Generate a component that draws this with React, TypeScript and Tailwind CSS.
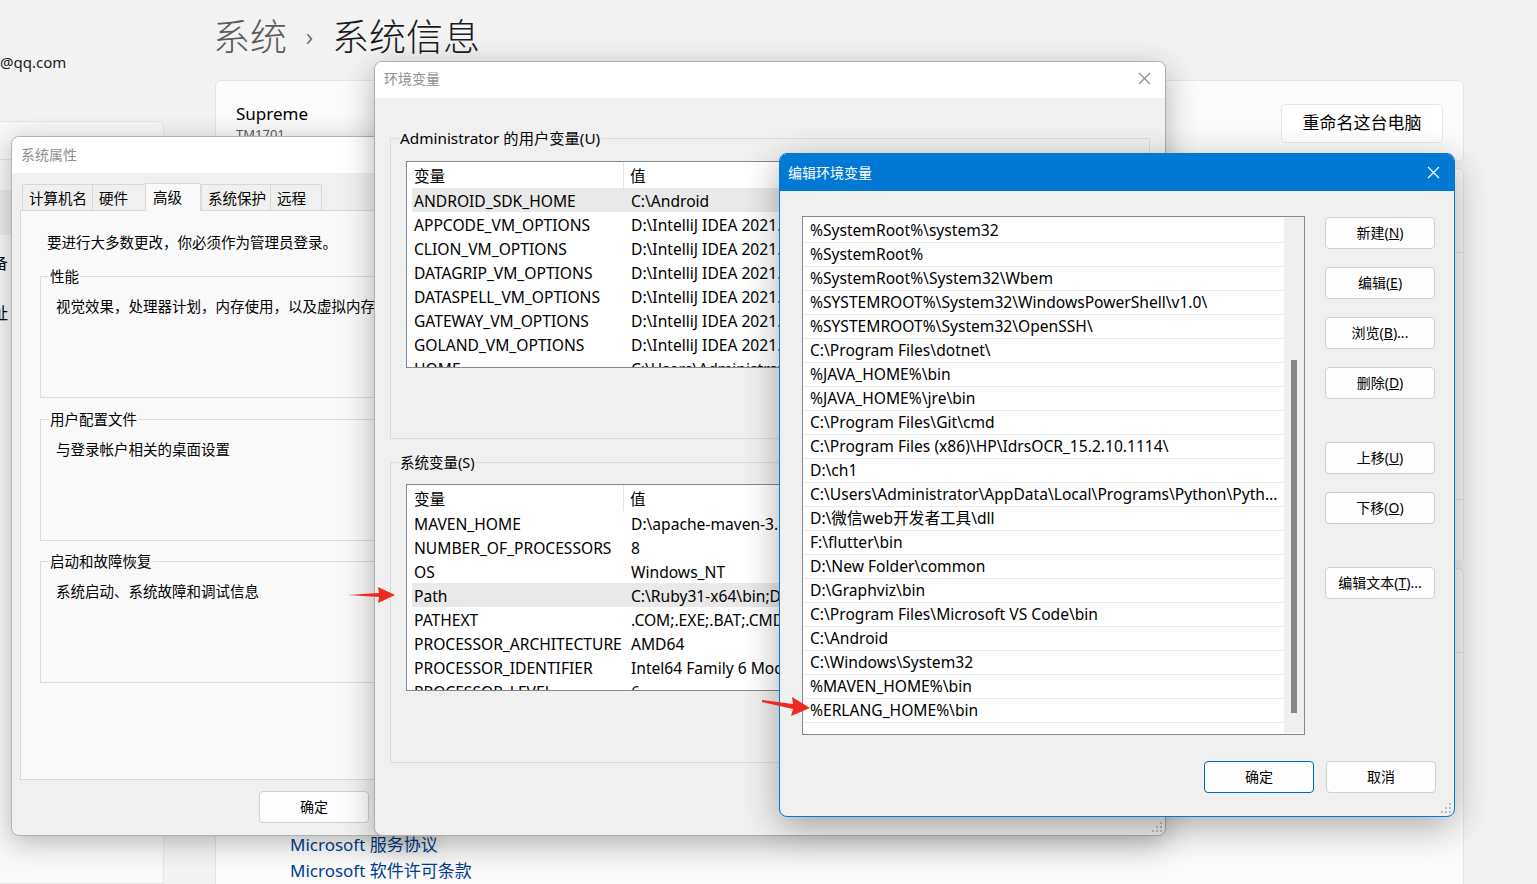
import clsx from "clsx";

const userVars = [
  ["ANDROID_SDK_HOME", "C:\\Android"],
  ["APPCODE_VM_OPTIONS", "D:\\IntelliJ IDEA 2021.3\\appcode.vmoptions"],
  ["CLION_VM_OPTIONS", "D:\\IntelliJ IDEA 2021.3\\clion.vmoptions"],
  ["DATAGRIP_VM_OPTIONS", "D:\\IntelliJ IDEA 2021.3\\datagrip.vmoptions"],
  ["DATASPELL_VM_OPTIONS", "D:\\IntelliJ IDEA 2021.3\\dataspell.vmoptions"],
  ["GATEWAY_VM_OPTIONS", "D:\\IntelliJ IDEA 2021.3\\gateway.vmoptions"],
  ["GOLAND_VM_OPTIONS", "D:\\IntelliJ IDEA 2021.3\\goland.vmoptions"],
  ["HOME", "C:\\Users\\Administrator"],
];

const sysVars = [
  ["MAVEN_HOME", "D:\\apache-maven-3.8.4"],
  ["NUMBER_OF_PROCESSORS", "8"],
  ["OS", "Windows_NT"],
  ["Path", "C:\\Ruby31-x64\\bin;D:\\Python"],
  ["PATHEXT", ".COM;.EXE;.BAT;.CMD;.VBS"],
  ["PROCESSOR_ARCHITECTURE", "AMD64"],
  ["PROCESSOR_IDENTIFIER", "Intel64 Family 6 Model 142"],
  ["PROCESSOR_LEVEL", "6"],
];

const paths = [
  "%SystemRoot%\\system32",
  "%SystemRoot%",
  "%SystemRoot%\\System32\\Wbem",
  "%SYSTEMROOT%\\System32\\WindowsPowerShell\\v1.0\\",
  "%SYSTEMROOT%\\System32\\OpenSSH\\",
  "C:\\Program Files\\dotnet\\",
  "%JAVA_HOME%\\bin",
  "%JAVA_HOME%\\jre\\bin",
  "C:\\Program Files\\Git\\cmd",
  "C:\\Program Files (x86)\\HP\\IdrsOCR_15.2.10.1114\\",
  "D:\\ch1",
  "C:\\Users\\Administrator\\AppData\\Local\\Programs\\Python\\Pyth...",
  "D:\\微信web开发者工具\\dll",
  "F:\\flutter\\bin",
  "D:\\New Folder\\common",
  "D:\\Graphviz\\bin",
  "C:\\Program Files\\Microsoft VS Code\\bin",
  "C:\\Android",
  "C:\\Windows\\System32",
  "%MAVEN_HOME%\\bin",
  "%ERLANG_HOME%\\bin",
];

const tabs = [
  { label: "计算机名", cls: "w-[71px]" },
  { label: "硬件", cls: "w-[54px]" },
  { label: "高级", cls: "w-[56px]", active: true },
  { label: "系统保护", cls: "w-[70px]" },
  { label: "远程", cls: "w-[52px]" },
];

function CloseX({ color }: { color: string }) {
  return (
    <svg width="13" height="13" viewBox="0 0 13 13">
      <path d="M1 1L12 12M12 1L1 12" stroke={color} strokeWidth="1.1" />
    </svg>
  );
}

function Grip() {
  return (
    <svg width="10" height="10" viewBox="0 0 10 10">
      {[
        [8, 0],
        [4, 4],
        [8, 4],
        [0, 8],
        [4, 8],
        [8, 8],
      ].map(([x, y], i) => (
        <rect key={i} x={x} y={y} width="2" height="2" fill="#bdbdbd" />
      ))}
    </svg>
  );
}

function Btn({
  children,
  primary,
  className,
}: {
  children: React.ReactNode;
  primary?: boolean;
  className?: string;
}) {
  return (
    <div
      className={clsx(
        "flex h-[32px] w-[110px] shrink-0 items-center justify-center rounded-[4px] border bg-[#fdfdfd] text-[14px] leading-none",
        primary ? "border-[#0067c0]" : "border-[#cfcfcf]",
        className
      )}
    >
      {children}
    </div>
  );
}

function VarList({ rows, selected }: { rows: string[][]; selected: number }) {
  return (
    <div className="h-[207px] w-[728px] overflow-hidden border border-[#828790] bg-white text-[15.6px]">
      <div className="flex h-[26px]">
        <div className="flex h-full w-[217px] items-center border-r border-[#e5e5e5] pl-[7px] pt-[4px]">变量</div>
        <div className="flex items-center pl-[6px] pt-[4px]">值</div>
      </div>
      {rows.map(([k, v], i) => (
        <div
          key={k}
          className={clsx(
            "ml-[5px] flex h-[24px] items-center whitespace-nowrap pt-[3px]",
            i === selected && "bg-[#e9e9e9]"
          )}
        >
          <div className="w-[219px] shrink-0 pl-[2px]">{k}</div>
          <div>{v}</div>
        </div>
      ))}
    </div>
  );
}

function Group({ label, className, children }: { label: string; className: string; children?: React.ReactNode }) {
  return (
    <fieldset className={clsx("border border-[#dcdcdc]", className)}>
      <legend className="ml-[8px] px-[1px] text-[14.5px] leading-[20px]">{label}</legend>
      {children}
    </fieldset>
  );
}

export default function App() {
  return (
    <div className="relative h-[884px] w-[1537px] overflow-hidden bg-[#f3f3f3] font-['Noto_Sans','Noto_Sans_CJK_SC',sans-serif] text-black">
      {/* settings page behind the dialogs */}
      <div className="flex h-full">
        <div className="flex w-[164px] flex-col">
          <div className="mt-[52px] h-[20px] text-[15px] leading-[20px] text-[#1b1b1b]">@qq.com</div>
          <div className="mt-[49px] flex-1 rounded-tr-[6px] border border-l-0 border-[#e5e5e5] bg-[#f9f9f9]">
            <div className="h-[38px] border-b border-[#e5e5e5]" />
            <div className="mt-[30px] h-[45px] bg-[#ececec]" />
            <div className="-ml-[8px] mt-[16px] text-[16px]">备</div>
            <div className="-ml-[8px] mt-[26px] text-[16px]">址</div>
          </div>
        </div>
        <div className="ml-[51px] flex w-[1249px] flex-col">
          <div className="-ml-[2px] flex h-[76px] items-center gap-[19px] pb-[2px] text-[37px] font-light leading-none">
            <span className="text-[#5c5c5c]">系统</span>
            <span className="text-[26px] text-[#5c5c5c]">›</span>
            <span className="text-[#1b1b1b]">系统信息</span>
          </div>
          <div className="mt-[5px] flex h-[84px] items-start justify-between rounded-[6px] border border-[#e5e5e5] bg-[#fbfbfb] pl-[20px] pr-[20px] pt-[22px]">
            <div>
              <div className="text-[17px] leading-[22px]">Supreme</div>
              <div className="text-[13px] leading-[18px] text-[#5c5c5c]">TM1701</div>
            </div>
            <div className="mt-px flex h-[39px] w-[162px] items-center justify-center rounded-[5px] border border-[#e5e5e5] bg-white text-[17px]">
              重命名这台电脑
            </div>
          </div>
          <div className="mt-[6px] h-[401px] rounded-[6px] border border-[#e5e5e5] bg-[#fbfbfb]">
            <div className="h-[84px] border-b border-[#e5e5e5]" />
            <div className="h-[247px] border-b border-[#e5e5e5]" />
          </div>
          <div className="mt-[6px] flex-1 rounded-t-[6px] border border-b-0 border-[#e5e5e5] bg-[#fbfbfb]">
            <div className="h-[84px] border-b border-[#e5e5e5]" />
            <div className="ml-[74px] mt-[179px] text-[17px] leading-[26px] text-[#003e92]">
              <div>Microsoft 服务协议</div>
              <div>Microsoft 软件许可条款</div>
            </div>
          </div>
        </div>
      </div>

      {/* 系统属性 */}
      <div className="absolute left-[11px] top-[136px] flex h-[700px] w-[420px] flex-col overflow-hidden rounded-[8px] border border-[#b4b4b4] bg-[#f0f0f0] shadow-[0_6px_28px_rgba(0,0,0,0.28)]">
        <div className="flex h-[36px] items-center bg-white pb-[2px] pl-[9px] text-[14px] text-[#8f8f8f]">系统属性</div>
        <div className="flex flex-1 flex-col pl-[8px] pt-[10px]">
          <div className="flex items-end pl-[2px]">
            {tabs.map((t) =>
              t.active ? (
                <div
                  key={t.label}
                  className={clsx(
                    "relative z-10 -mb-px h-[28px] border border-b-0 border-[#d9d9d9] bg-[#f9f9f9] pl-[7px] text-[14.5px] leading-[26px]",
                    t.cls
                  )}
                >
                  {t.label}
                </div>
              ) : (
                <div
                  key={t.label}
                  className={clsx(
                    "-mr-px h-[26px] border border-b-0 border-[#d9d9d9] bg-[#f0f0f0] pl-[6px] text-[14.5px] leading-[26px]",
                    t.cls
                  )}
                >
                  {t.label}
                </div>
              )
            )}
          </div>
          <div className="h-[570px] border border-[#d9d9d9] bg-[#f9f9f9] pl-[19px] pt-[21px]">
            <div className="pl-[7px] text-[14.5px] leading-[20px]">要进行大多数更改，你必须作为管理员登录。</div>
            <Group label="性能" className="mt-[14px] h-[132px]">
              <div className="pl-[15px] pt-[10px] text-[14.5px] leading-[20px]">视觉效果，处理器计划，内存使用，以及虚拟内存</div>
            </Group>
            <Group label="用户配置文件" className="mt-[11px] h-[132px]">
              <div className="pl-[15px] pt-[10px] text-[14.5px] leading-[20px]">与登录帐户相关的桌面设置</div>
            </Group>
            <Group label="启动和故障恢复" className="mt-[10px] h-[132px]">
              <div className="pl-[15px] pt-[10px] text-[14.5px] leading-[20px]">系统启动、系统故障和调试信息</div>
            </Group>
          </div>
          <div className="mt-[11px] flex gap-[12px] pl-[239px]">
            <Btn>确定</Btn>
            <Btn>取消</Btn>
          </div>
        </div>
      </div>

      {/* 环境变量 */}
      <div className="absolute left-[374px] top-[61px] flex h-[775px] w-[792px] flex-col overflow-hidden rounded-[8px] border border-[#adadad] bg-[#f0f0f0] shadow-[0_8px_32px_rgba(0,0,0,0.3)]">
        <div className="flex h-[36px] items-center justify-between bg-white pb-[3px] pl-[9px] pr-[14px] text-[14px] text-[#8f8f8f]">
          <span>环境变量</span>
          <CloseX color="#8a8a8a" />
        </div>
        <div className="flex-1 px-[15px] pt-[30px]">
          <Group label="Administrator 的用户变量(U)" className="h-[311px] [&>legend]:text-[15.3px]">
            <div className="pl-[15px] pt-[13px]">
              <VarList rows={userVars} selected={0} />
            </div>
          </Group>
          <Group label="系统变量(S)" className="mt-[13px] h-[311px]">
            <div className="pl-[15px] pt-[12px]">
              <VarList rows={sysVars} selected={3} />
            </div>
          </Group>
        </div>
        <div className="flex justify-end pb-[3px] pr-[3px]">
          <Grip />
        </div>
      </div>

      {/* 编辑环境变量 */}
      <div className="absolute left-[779px] top-[153px] flex h-[664px] w-[676px] flex-col overflow-hidden rounded-[8px] border border-[#0078d4] bg-[#f0f0f0] shadow-[0_10px_36px_rgba(0,0,0,0.32)]">
        <div className="flex h-[37px] items-center justify-between bg-[#0078d4] pb-px pl-[8px] pr-[14px] text-[14px] text-white">
          <span>编辑环境变量</span>
          <CloseX color="#ffffff" />
        </div>
        <div className="flex pl-[22px] pt-[25px]">
          <div className="flex h-[519px] w-[503px] border border-[#828790] bg-white text-[15.6px]">
            <div className="flex-1 overflow-hidden pt-[2px]">
              {paths.map((p) => (
                <div
                  key={p}
                  className="flex h-[24px] items-center whitespace-nowrap border-b border-[#ebebeb] pl-[7px] leading-none"
                >
                  {p}
                </div>
              ))}
            </div>
            <div className="mb-px w-[20px] shrink-0 bg-[#efefef] pt-[143px]">
              <div className="mx-auto h-[353px] w-[6px] bg-[#858585]" />
            </div>
          </div>
          <div className="ml-[20px] flex flex-col pt-px">
            <Btn>
              新建(<span className="underline">N</span>)
            </Btn>
            <Btn className="mt-[18px]">
              编辑(<span className="underline">E</span>)
            </Btn>
            <Btn className="mt-[18px]">
              浏览(<span className="underline">B</span>)...
            </Btn>
            <Btn className="mt-[18px]">
              删除(<span className="underline">D</span>)
            </Btn>
            <Btn className="mt-[43px]">
              上移(<span className="underline">U</span>)
            </Btn>
            <Btn className="mt-[18px]">
              下移(<span className="underline">O</span>)
            </Btn>
            <Btn className="mt-[43px]">
              编辑文本(<span className="underline">T</span>)...
            </Btn>
          </div>
        </div>
        <div className="mt-[26px] flex justify-end gap-[12px] pr-[18px]">
          <Btn primary>确定</Btn>
          <Btn>取消</Btn>
        </div>
        <div className="mt-auto flex justify-end pb-[3px] pr-[3px]">
          <Grip />
        </div>
      </div>

      {/* red arrows */}
      <svg className="absolute left-[348px] top-[586px]" width="48" height="18" viewBox="0 0 48 18">
        <polygon points="0,9 31,7 30,1 47,9 30,17 31,11" fill="#ee2a1f" />
      </svg>
      <svg className="absolute left-[762px] top-[697px]" width="50" height="20" viewBox="0 0 50 20">
        <polygon points="0,3 31,7 30,0 48,11 29,19 31,12 0,5" fill="#ee2a1f" />
      </svg>
    </div>
  );
}
